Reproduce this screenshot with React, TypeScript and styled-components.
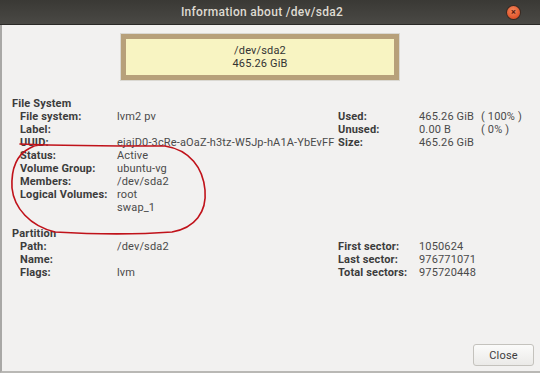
import { Fragment } from "react";
import styled, { createGlobalStyle } from "styled-components";

const GlobalStyle = createGlobalStyle`
    html, body {
        margin: 0;
        padding: 0;
        background: #2f2e2b;
    }
    body {
        font-family: Roboto, "Open Sans", "DejaVu Sans", sans-serif;
    }
`;

interface IRow {
    label: string;
    value?: string;
    extra?: string;
}

const FILE_SYSTEM: IRow[] = [
    { label: "File system:", value: "lvm2 pv" },
    { label: "Label:" },
    { label: "UUID:", value: "ejajD0-3cRe-aOaZ-h3tz-W5Jp-hA1A-YbEvFF" },
    { label: "Status:", value: "Active" },
    { label: "Volume Group:", value: "ubuntu-vg" },
    { label: "Members:", value: "/dev/sda2" },
    { label: "Logical Volumes:", value: "root" },
    { label: "", value: "swap_1" },
];

const USAGE: IRow[] = [
    { label: "Used:", value: "465.26 GiB", extra: "( 100% )" },
    { label: "Unused:", value: "0.00 B", extra: "( 0% )" },
    { label: "Size:", value: "465.26 GiB" },
];

const PARTITION: IRow[] = [
    { label: "Path:", value: "/dev/sda2" },
    { label: "Name:" },
    { label: "Flags:", value: "lvm" },
];

const SECTORS: IRow[] = [
    { label: "First sector:", value: "1050624" },
    { label: "Last sector:", value: "976771071" },
    { label: "Total sectors:", value: "975720448" },
];

const Window = styled.div`
    position: relative;
    width: 540px;
    height: 373px;
    display: flex;
    flex-direction: column;
    overflow: hidden;
    background: #2f2e2b;
`;

const TitleBar = styled.div`
    height: 24px;
    flex: none;
    display: flex;
    align-items: center;
    justify-content: center;
    padding-right: 16px;
    background: linear-gradient(#3a3935, #4a4945);
    border-bottom: 1px solid #2a2926;
    color: #dfdbd2;
    font-size: 12px;
    font-weight: 500;
    letter-spacing: 0.3px;
    position: relative;
`;

const CloseDot = styled.div`
    position: absolute;
    right: 20px;
    top: 6px;
    width: 13px;
    height: 13px;
    border-radius: 50%;
    background: radial-gradient(circle at 45% 35%, #f58a5f, #df4f25 75%);
    box-shadow: 0 0 0 1px #3a2a22;
    display: flex;
    align-items: center;
    justify-content: center;
    color: #5a2010;
    font-size: 9px;
    font-weight: 700;
    line-height: 1;
`;

const Body = styled.div`
    flex: 1;
    display: flex;
    flex-direction: column;
    background: #f2f1f0;
    border-left: 2px solid #a9a8a6;
    border-bottom: 2px solid #b9b8b5;
    padding: 9px 6px 5px 0;
    color: #3c3c3c;
    font-size: 11px;
    line-height: 13px;
    letter-spacing: 0.15px;
`;

const PartitionBox = styled.div`
    margin-left: 119px;
    width: 268px;
    height: 36px;
    border: 5px solid #b7a07a;
    box-shadow: 0 0 0 1px #dad8d2;
    background: #f8f4c2;
    display: flex;
    flex-direction: column;
    align-items: center;
    justify-content: center;
    color: #333;
    font-size: 11px;
    line-height: 13px;
`;

const Heading = styled.div<{ $top: number }>`
    margin-top: ${(p) => p.$top}px;
    padding-left: 10px;
    font-weight: 700;
    color: #3c3c3c;
`;

const Columns = styled.div`
    display: flex;
    padding-left: 18px;
`;

const Grid = styled.div<{ $cols: string }>`
    display: grid;
    grid-template-columns: ${(p) => p.$cols};
    grid-auto-rows: 13px;
    align-content: start;
    white-space: nowrap;
`;

const Label = styled.span`
    font-weight: 700;
    color: #3c3c3c;
`;

const Value = styled.span`
    color: #4a4a4a;
`;

const Footer = styled.div`
    margin-top: auto;
    display: flex;
    justify-content: flex-end;
`;

const Button = styled.button`
    width: 61px;
    height: 22px;
    border: 1px solid #c4c2bd;
    border-radius: 3px;
    background: linear-gradient(#fbfbfa, #ebeae8);
    color: #3c3c3c;
    font-family: inherit;
    font-size: 11px;
    letter-spacing: 0.2px;
    padding: 0;
`;

const Annotation = styled.svg`
    position: absolute;
    left: 0;
    top: 0;
    pointer-events: none;
`;

const Pairs = ({ rows, cols }: { rows: IRow[]; cols: string }) => (
    <Grid $cols={cols}>
        {rows.map((row, i) => (
            <Fragment key={i}>
                <Label>{row.label}</Label>
                <Value>{row.value ?? ""}</Value>
                {cols.split(" ").length > 2 && <Value>{row.extra ?? ""}</Value>}
            </Fragment>
        ))}
    </Grid>
);

const App = () => {
    return (
        <Window>
            <GlobalStyle />
            <TitleBar>
                Information about /dev/sda2
                <CloseDot>×</CloseDot>
            </TitleBar>
            <Body>
                <PartitionBox>
                    <span>/dev/sda2</span>
                    <span>465.26 GiB</span>
                </PartitionBox>
                <Heading $top={17}>File System</Heading>
                <Columns>
                    <Pairs rows={FILE_SYSTEM} cols="97px 221px" />
                    <Pairs rows={USAGE} cols="81px 62px 50px" />
                </Columns>
                <Heading $top={13}>Partition</Heading>
                <Columns>
                    <Pairs rows={PARTITION} cols="97px 221px" />
                    <Pairs rows={SECTORS} cols="81px 90px" />
                </Columns>
                <Footer>
                    <Button>Close</Button>
                </Footer>
            </Body>
            <Annotation width="540" height="373" viewBox="0 0 540 373">
                <path
                    d="M20 144 C70 146 120 146 165 146 C190 150 203 168 205 190 C207 212 195 228 172 232 C130 235 90 234 55 232 C30 226 14 208 12 188 C11 168 16 155 30 148 C33 146 36 145 40 145"
                    fill="none"
                    stroke="#c0121a"
                    strokeWidth="1.6"
                    strokeLinecap="round"
                />
            </Annotation>
        </Window>
    );
};

export default App;
